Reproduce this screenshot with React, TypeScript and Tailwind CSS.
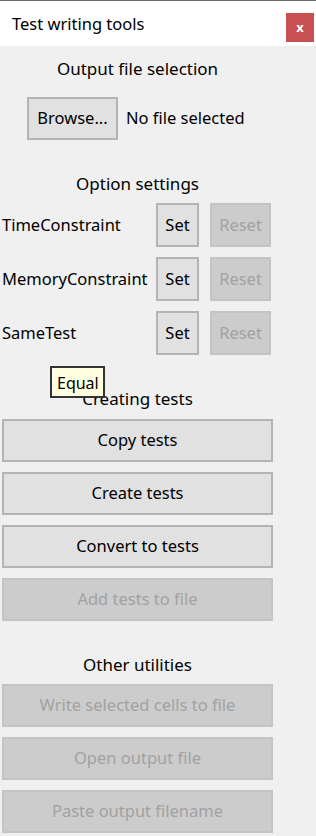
import React from "react";

const font = { fontFamily: '"Noto Sans", "Open Sans", sans-serif' };

const Btn = ({ children, disabled, className = "" }: { children: React.ReactNode; disabled?: boolean; className?: string }) => (
  <div
    className={
      "flex items-center justify-center border-2 text-[16.5px] " +
      (disabled
        ? "bg-[#cccccc] border-[#c4c4c4] text-[#a2a2a2] "
        : "bg-[#e1e1e1] border-[#b4b4b4] text-black ") +
      className
    }
  >
    {children}
  </div>
);

const Heading = ({ children, className = "" }: { children: React.ReactNode; className?: string }) => (
  <div className={"h-[22px] leading-[22px] text-center text-[17px] text-black " + className}>{children}</div>
);

const OptionRow = ({ label }: { label: string }) => (
  <div className="flex h-[44px]">
    <div className="w-[154px] flex items-center text-[16.5px] text-black whitespace-nowrap">{label}</div>
    <Btn className="w-[43px]">Set</Btn>
    <Btn disabled className="ml-[11px] w-[61px]">Reset</Btn>
  </div>
);

const App = () => {
  return (
    <div className="w-[316px] h-[836px] bg-[#f0f0f0] relative overflow-hidden" style={font}>
      <div className="h-px bg-[#6b6b6b]" />
      <div className="h-[45px] bg-white flex items-start justify-between">
        <div className="ml-[12px] mt-[12px] text-[16.5px] leading-[22px] text-black">Test writing tools</div>
        <div className="mt-[12px] mr-[2px] w-[28px] h-[29px] bg-[#c75050] flex items-center justify-center text-white text-[13px] font-bold leading-none">
          x
        </div>
      </div>

      <div className="ml-[2px] w-[271px] flex flex-col">
        <Heading className="mt-[12px]">Output file selection</Heading>
        <div className="mt-[17px] flex items-center h-[43px]">
          <Btn className="ml-[25px] w-[91px] h-[43px]">Browse...</Btn>
          <span className="ml-[8px] text-[16.5px] text-black">No file selected</span>
        </div>

        <Heading className="mt-[33px]">Option settings</Heading>
        <div className="mt-[8px] flex flex-col gap-[10px]">
          <OptionRow label="TimeConstraint" />
          <OptionRow label="MemoryConstraint" />
          <OptionRow label="SameTest" />
        </div>

        <Heading className="mt-[33px]">Creating tests</Heading>
        <div className="mt-[9px] flex flex-col gap-[10px]">
          <Btn className="h-[43px]">Copy tests</Btn>
          <Btn className="h-[43px]">Create tests</Btn>
          <Btn className="h-[43px]">Convert to tests</Btn>
          <Btn disabled className="h-[43px]">Add tests to file</Btn>
        </div>

        <Heading className="mt-[33px]">Other utilities</Heading>
        <div className="mt-[8px] flex flex-col gap-[10px]">
          <Btn disabled className="h-[43px]">Write selected cells to file</Btn>
          <Btn disabled className="h-[43px]">Open output file</Btn>
          <Btn disabled className="h-[43px]">Paste output filename</Btn>
        </div>
      </div>

      <div className="absolute left-[50px] top-[366px] w-[55px] h-[32px] bg-[#ffffe1] border-2 border-[#333333] flex items-center pl-[5px] pt-[2px] text-[16px] text-black">
        Equal
      </div>
    </div>
  );
};

export default App;
